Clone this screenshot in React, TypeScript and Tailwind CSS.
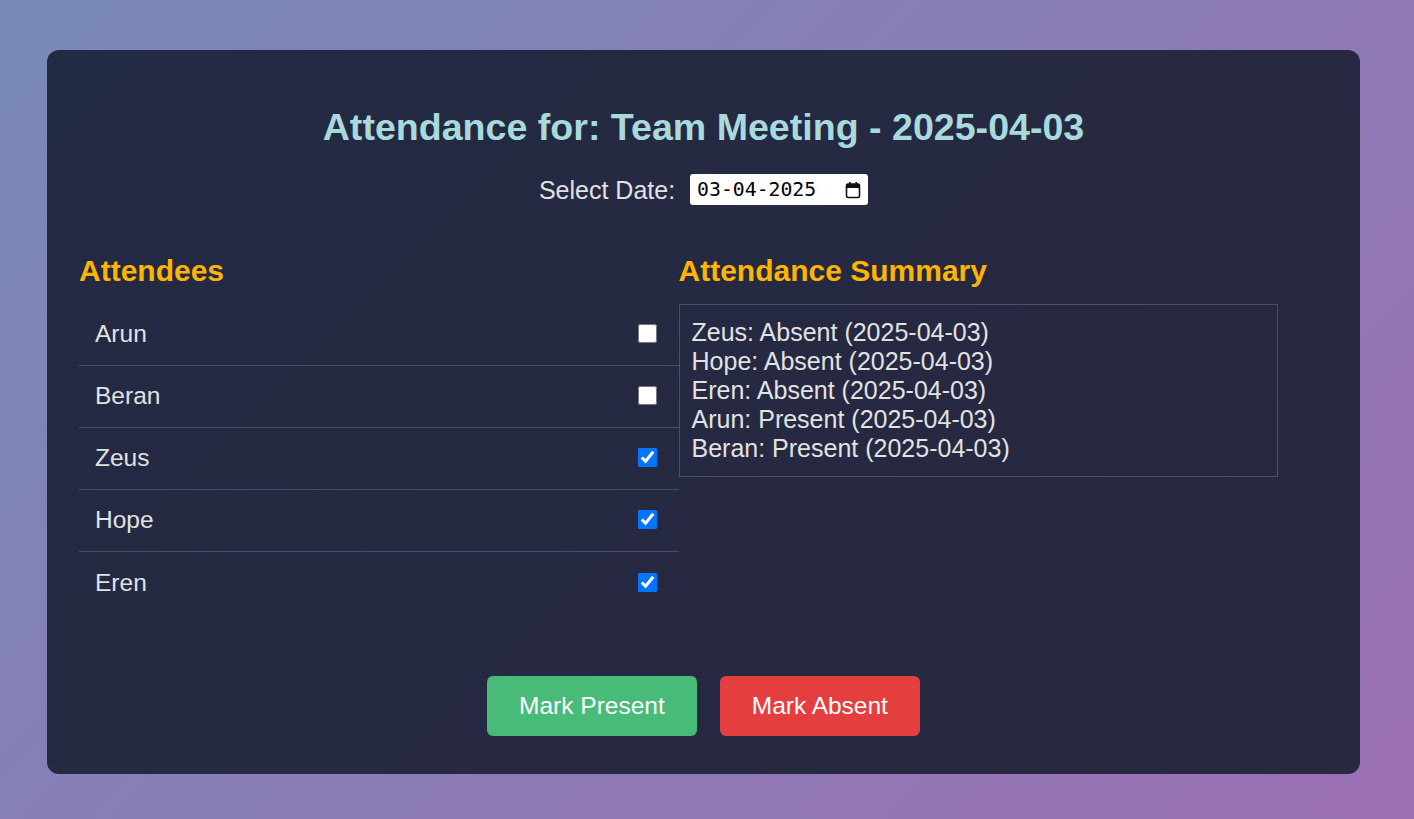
import { useState } from 'react';

const NAMES = ['Arun', 'Beran', 'Zeus', 'Hope', 'Eren'];

const SUMMARY = [
  'Zeus: Absent (2025-04-03)',
  'Hope: Absent (2025-04-03)',
  'Eren: Absent (2025-04-03)',
  'Arun: Present (2025-04-03)',
  'Beran: Present (2025-04-03)',
];

const CalendarIcon = () => (
  <svg width="16" height="18" viewBox="0 0 16 18" fill="none">
    <rect x="1.5" y="3" width="13" height="13.5" rx="1.5" stroke="#111" strokeWidth="1.6" />
    <rect x="1.5" y="3" width="13" height="4" fill="#111" />
    <rect x="4" y="1" width="1.6" height="3.5" fill="#111" />
    <rect x="10.4" y="1" width="1.6" height="3.5" fill="#111" />
  </svg>
);

const App = () => {
  const [checked, setChecked] = useState<Record<string, boolean>>({
    Arun: false,
    Beran: false,
    Zeus: true,
    Hope: true,
    Eren: true,
  });

  return (
    <div
      className="w-full h-[819px] overflow-hidden bg-[linear-gradient(135deg,#7889b8,#9b6fb3)] font-['Liberation_Sans',Arial,sans-serif]"
    >
      <div className="ml-[47px] mt-[50px] w-[1313px] h-[724px] rounded-[12px] px-[32px] bg-[linear-gradient(135deg,#232a44,#28283f)] flex flex-col">
        <h1 className="pt-[56px] text-center text-[37.6px] leading-[42px] font-bold text-[#a8dadc]">
          Attendance for: Team Meeting - 2025-04-03
        </h1>

        <div className="mt-[26px] flex items-center justify-center gap-[15px]">
          <span className="text-[25px] leading-[28px] text-[#e2e2e2]">Select Date:</span>
          <div className="w-[178px] h-[31px] bg-white rounded-[3px] flex items-center justify-between pl-[7px] pr-[7px]">
            <span className="font-['DejaVu_Sans_Mono',monospace] text-[19.8px] leading-[24px] text-black">
              03-04-2025
            </span>
            <CalendarIcon />
          </div>
        </div>

        <div className="mt-[49px] flex">
          <div className="w-[48%]">
            <h2 className="text-[30px] leading-[34px] font-bold text-[#ffb400]">Attendees</h2>
            <ul className="mt-[16px]">
              {NAMES.map((name, i) => (
                <li
                  key={name}
                  className={`h-[62px] flex items-center justify-between pl-[16px] pr-[22px] ${
                    i < NAMES.length - 1 ? 'border-b border-[#474d60]' : ''
                  }`}
                >
                  <span className="text-[24.5px] text-[#e2e2e2]">{name}</span>
                  <input
                    type="checkbox"
                    checked={checked[name]}
                    onChange={() => setChecked({ ...checked, [name]: !checked[name] })}
                    className="w-[19px] h-[19px] mb-[2px] accent-[#0075ff]"
                  />
                </li>
              ))}
            </ul>
          </div>

          <div className="w-[48%]">
            <h2 className="text-[30px] leading-[34px] font-bold text-[#ffb400]">Attendance Summary</h2>
            <div className="mt-[16px] border border-[#4a5165] px-[12px] py-[13px] text-[25px] leading-[29px] text-[#e2e2e2]">
              {SUMMARY.map((line) => (
                <div key={line}>{line}</div>
              ))}
            </div>
          </div>
        </div>

        <div className="mt-[62px] flex justify-center gap-[23px]">
          <button className="h-[60px] px-[32px] rounded-[6px] bg-[#48bb78] text-white text-[24.5px]">
            Mark Present
          </button>
          <button className="h-[60px] px-[32px] rounded-[6px] bg-[#e53e3e] text-white text-[24.5px]">
            Mark Absent
          </button>
        </div>
      </div>
    </div>
  );
};

export default App;
